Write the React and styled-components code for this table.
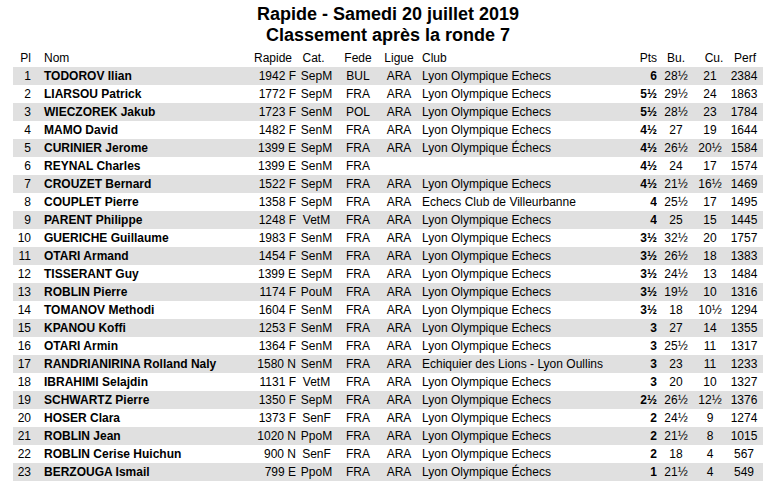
import React from 'react';
import styled, { createGlobalStyle } from 'styled-components';

const GlobalStyle = createGlobalStyle`
  html, body {
    margin: 0;
    padding: 0;
    background: #fff;
  }
  body {
    font-family: 'Liberation Sans', Arial, sans-serif;
    color: #000;
  }
`;

const Page = styled.div`
  width: 750px;
  padding: 4px 0 0 13px;
`;

const Title = styled.h1`
  margin: 0 0 3px;
  font-size: 18px;
  font-weight: 700;
  line-height: 21px;
  text-align: center;
`;

const Table = styled.div`
  display: flex;
  flex-direction: column;
  font-size: 12px;
`;

const Row = styled.div`
  display: grid;
  grid-template-columns: 21px 216px 46px 41px 42px 40px 211px 27px 38px 30px 38px;
  height: 18px;
  line-height: 18px;
  background: ${(props) => (props.shaded ? '#e0e0e0' : 'transparent')};
`;

const Cell = styled.div`
  white-space: nowrap;
  overflow: hidden;
  text-align: ${(props) => props.align || 'left'};
  font-weight: ${(props) => (props.bold ? 700 : 400)};
  padding-left: ${(props) => props.pl || 0}px;
  padding-right: ${(props) => props.pr || 0}px;
`;

const columns = [
    { key: 'pl', label: 'Pl', align: 'right', pr: 3 },
    { key: 'nom', label: 'Nom', align: 'left', pl: 10, bold: true },
    { key: 'rapide', label: 'Rapide', align: 'right', head: { align: 'center' } },
    { key: 'cat', label: 'Cat.', align: 'center', head: { pr: 6 } },
    { key: 'fede', label: 'Fede', align: 'center' },
    { key: 'ligue', label: 'Ligue', align: 'center' },
    { key: 'club', label: 'Club', align: 'left', pl: 3 },
    { key: 'pts', label: 'Pts', align: 'right', bold: true },
    { key: 'bu', label: 'Bu.', align: 'center' },
    { key: 'cu', label: 'Cu.', align: 'center', head: { pl: 8 } },
    { key: 'perf', label: 'Perf', align: 'center', head: { pl: 2 } },
];

const LOE = 'Lyon Olympique Echecs';

const players = [
    ['TODOROV Ilian', '1942 F', 'SepM', 'BUL', 'ARA', LOE, '6', '28½', '21', '2384'],
    ['LIARSOU Patrick', '1772 F', 'SepM', 'FRA', 'ARA', LOE, '5½', '29½', '24', '1863'],
    ['WIECZOREK Jakub', '1723 F', 'SenM', 'POL', 'ARA', LOE, '5½', '28½', '23', '1784'],
    ['MAMO David', '1482 F', 'SenM', 'FRA', 'ARA', LOE, '4½', '27', '19', '1644'],
    ['CURINIER Jerome', '1399 E', 'SepM', 'FRA', 'ARA', 'Lyon Olympique Échecs', '4½', '26½', '20½', '1584'],
    ['REYNAL Charles', '1399 E', 'SenM', 'FRA', '', '', '4½', '24', '17', '1574'],
    ['CROUZET Bernard', '1522 F', 'SepM', 'FRA', 'ARA', LOE, '4½', '21½', '16½', '1469'],
    ['COUPLET Pierre', '1358 F', 'SepM', 'FRA', 'ARA', 'Echecs Club de Villeurbanne', '4', '25½', '17', '1495'],
    ['PARENT Philippe', '1248 F', 'VetM', 'FRA', 'ARA', LOE, '4', '25', '15', '1445'],
    ['GUERICHE Guillaume', '1983 F', 'SenM', 'FRA', 'ARA', LOE, '3½', '32½', '20', '1757'],
    ['OTARI Armand', '1454 F', 'SenM', 'FRA', 'ARA', LOE, '3½', '26½', '18', '1383'],
    ['TISSERANT Guy', '1399 E', 'SepM', 'FRA', 'ARA', LOE, '3½', '24½', '13', '1484'],
    ['ROBLIN Pierre', '1174 F', 'PouM', 'FRA', 'ARA', LOE, '3½', '19½', '10', '1316'],
    ['TOMANOV Methodi', '1604 F', 'SenM', 'FRA', 'ARA', LOE, '3½', '18', '10½', '1294'],
    ['KPANOU Koffi', '1253 F', 'SenM', 'FRA', 'ARA', LOE, '3', '27', '14', '1355'],
    ['OTARI Armin', '1364 F', 'SenM', 'FRA', 'ARA', LOE, '3', '25½', '11', '1317'],
    ['RANDRIANIRINA Rolland Naly', '1580 N', 'SenM', 'FRA', 'ARA', 'Echiquier des Lions - Lyon Oullins', '3', '23', '11', '1233'],
    ['IBRAHIMI Selajdin', '1131 F', 'VetM', 'FRA', 'ARA', LOE, '3', '20', '10', '1327'],
    ['SCHWARTZ Pierre', '1350 F', 'SepM', 'FRA', 'ARA', LOE, '2½', '26½', '12½', '1376'],
    ['HOSER Clara', '1373 F', 'SenF', 'FRA', 'ARA', LOE, '2', '24½', '9', '1274'],
    ['ROBLIN Jean', '1020 N', 'PpoM', 'FRA', 'ARA', LOE, '2', '21½', '8', '1015'],
    ['ROBLIN Cerise Huichun', '900 N', 'SenF', 'FRA', 'ARA', LOE, '2', '18', '4', '567'],
    ['BERZOUGA Ismail', '799 E', 'PpoM', 'FRA', 'ARA', 'Lyon Olympique Échecs', '1', '21½', '4', '549'],
];

const App = () => {
    return (
        <>
            <GlobalStyle />
            <Page>
                <Title>
                    Rapide - Samedi 20 juillet 2019
                    <br />
                    Classement après la ronde 7
                </Title>
                <Table>
                    <Row>
                        {columns.map((col) => {
                            const h = { align: col.align, pl: col.pl, pr: col.pr, ...col.head };
                            return (
                                <Cell key={col.key} align={h.align} pl={h.pl} pr={h.pr}>
                                    {col.label}
                                </Cell>
                            );
                        })}
                    </Row>
                    {players.map((p, i) => {
                        const values = [String(i + 1), ...p];
                        return (
                            <Row key={i} shaded={i % 2 === 0}>
                                {columns.map((col, j) => (
                                    <Cell
                                        key={col.key}
                                        align={col.align}
                                        bold={col.bold}
                                        pl={col.pl}
                                        pr={col.pr}
                                    >
                                        {values[j]}
                                    </Cell>
                                ))}
                            </Row>
                        );
                    })}
                </Table>
            </Page>
        </>
    );
};

export default App;
